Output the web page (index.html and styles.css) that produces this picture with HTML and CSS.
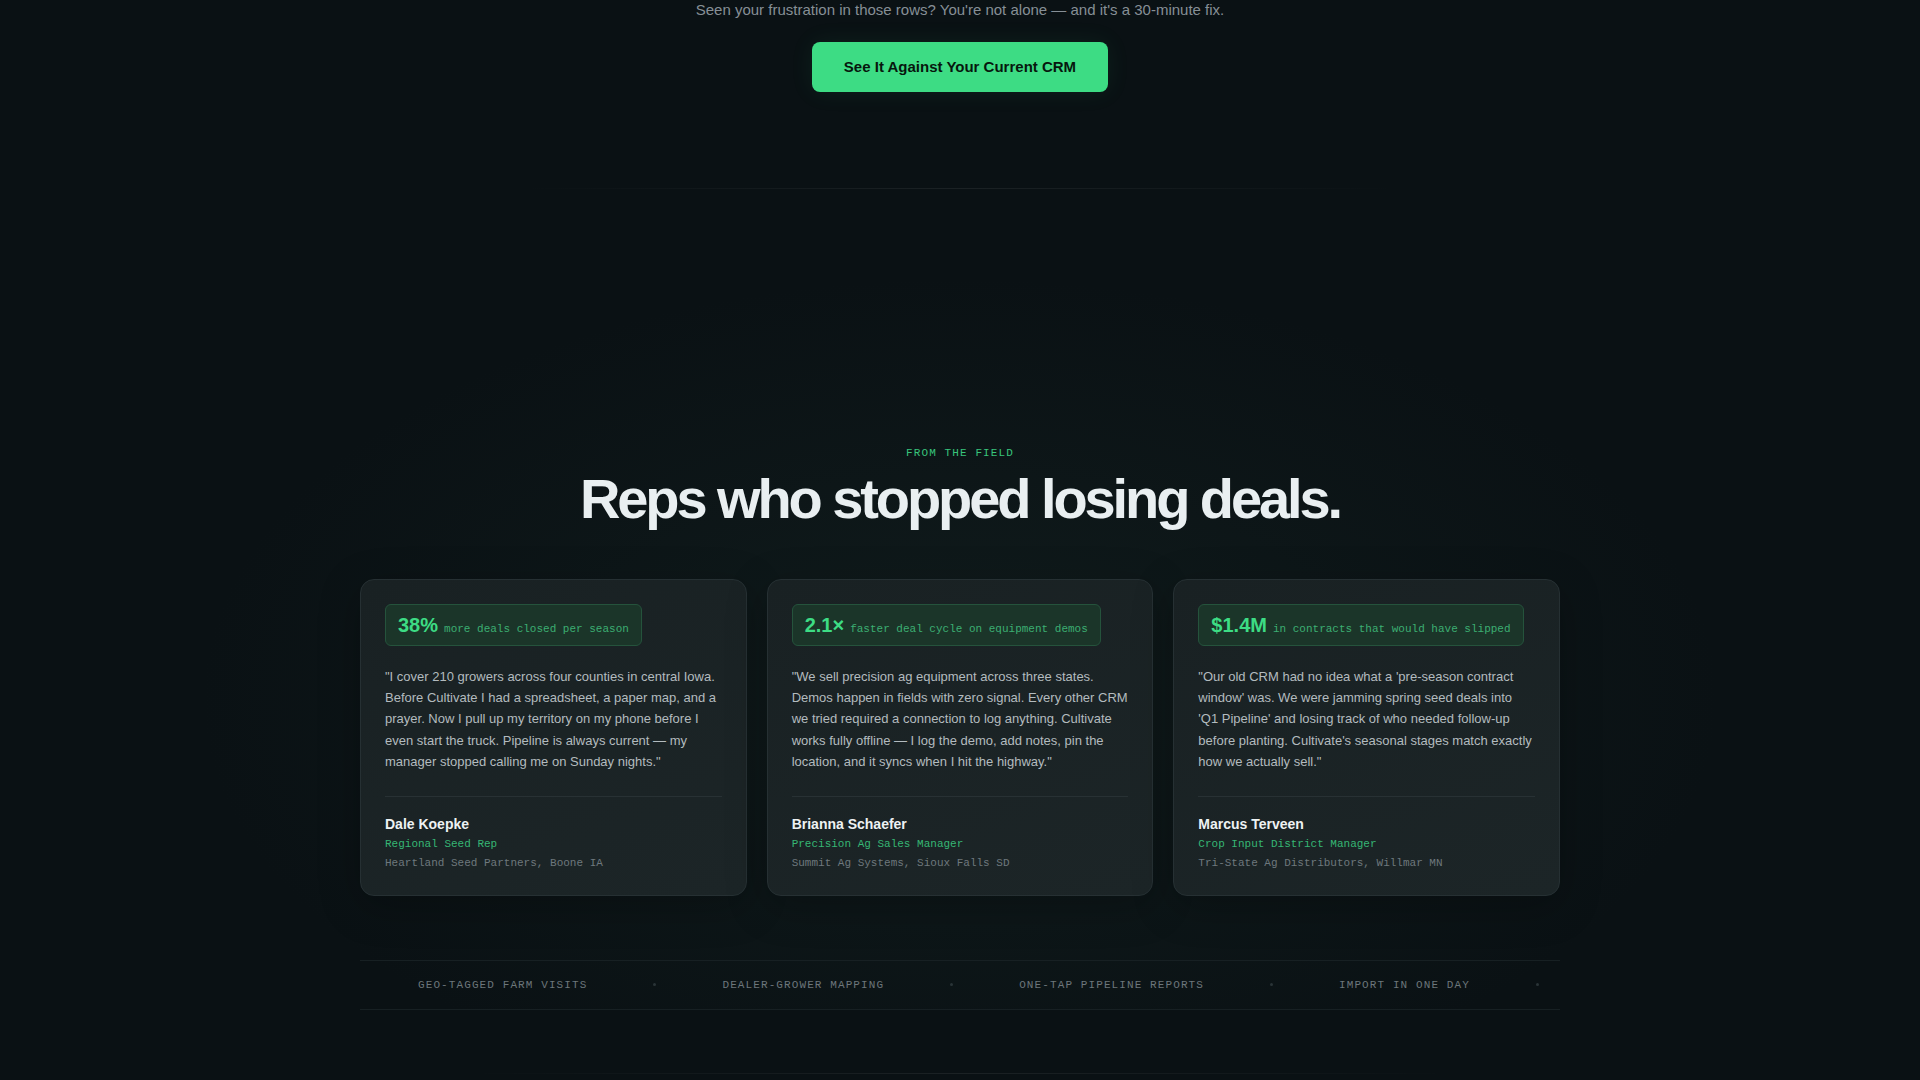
FILE: index.html
```html
<!DOCTYPE html>
<html lang="en">
<head>
    <meta charset="UTF-8">
    <meta name="viewport" content="width=device-width, initial-scale=1.0">
    <title>Cultivate - From the Field</title>
    <link rel="stylesheet" href="styles.css">
</head>
<body>
    <section class="cta">
        <p class="cta-sub">Seen your frustration in those rows? You're not alone — and it's a 30-minute fix.</p>
        <a class="cta-btn" href="#">See It Against Your Current CRM</a>
    </section>

    <div class="divider"></div>

    <section class="testimonials">
        <div class="eyebrow">FROM THE FIELD</div>
        <h2 class="section-title">Reps who stopped losing deals.</h2>

        <div class="cards">
            <div class="card">
                <div class="stat">
                    <span class="stat-num">38%</span>
                    <span class="stat-label">more deals closed per season</span>
                </div>
                <p class="quote">"I cover 210 growers across four counties in central Iowa. Before Cultivate I had a spreadsheet, a paper map, and a prayer. Now I pull up my territory on my phone before I even start the truck. Pipeline is always current — my manager stopped calling me on Sunday nights."</p>
                <div class="author">
                    <div class="author-name">Dale Koepke</div>
                    <div class="author-role">Regional Seed Rep</div>
                    <div class="author-org">Heartland Seed Partners, Boone IA</div>
                </div>
            </div>

            <div class="card">
                <div class="stat">
                    <span class="stat-num">2.1×</span>
                    <span class="stat-label">faster deal cycle on equipment demos</span>
                </div>
                <p class="quote">"We sell precision ag equipment across three states. Demos happen in fields with zero signal. Every other CRM we tried required a connection to log anything. Cultivate works fully offline — I log the demo, add notes, pin the location, and it syncs when I hit the highway."</p>
                <div class="author">
                    <div class="author-name">Brianna Schaefer</div>
                    <div class="author-role">Precision Ag Sales Manager</div>
                    <div class="author-org">Summit Ag Systems, Sioux Falls SD</div>
                </div>
            </div>

            <div class="card">
                <div class="stat">
                    <span class="stat-num">$1.4M</span>
                    <span class="stat-label">in contracts that would have slipped</span>
                </div>
                <p class="quote">"Our old CRM had no idea what a 'pre-season contract window' was. We were jamming spring seed deals into 'Q1 Pipeline' and losing track of who needed follow-up before planting. Cultivate's seasonal stages match exactly how we actually sell."</p>
                <div class="author">
                    <div class="author-name">Marcus Terveen</div>
                    <div class="author-role">Crop Input District Manager</div>
                    <div class="author-org">Tri-State Ag Distributors, Willmar MN</div>
                </div>
            </div>
        </div>

        <div class="features">
            <span class="feature">GEO-TAGGED FARM VISITS</span>
            <span class="dot"></span>
            <span class="feature">DEALER-GROWER MAPPING</span>
            <span class="dot"></span>
            <span class="feature">ONE-TAP PIPELINE REPORTS</span>
            <span class="dot"></span>
            <span class="feature">IMPORT IN ONE DAY</span>
            <span class="dot"></span>
        </div>
    </section>

    <div class="divider divider-wide"></div>
</body>
</html>
```

FILE: styles.css
```css
* {
    margin: 0;
    padding: 0;
    box-sizing: border-box;
}

body {
    background-color: #0a1114;
    color: #e8eef0;
    font-family: 'Liberation Sans', Arial, sans-serif;
    min-height: 1080px;
    overflow: hidden;
}

/* CTA tail of the previous section */
.cta {
    text-align: center;
    padding-bottom: 96px;
}

.cta-sub {
    font-size: 15px;
    line-height: 20px;
    color: #868f96;
}

.cta-btn {
    display: inline-block;
    margin-top: 22px;
    padding: 16px 32px;
    background-color: #3ddc84;
    color: #07170e;
    font-size: 15px;
    font-weight: bold;
    line-height: 18px;
    text-decoration: none;
    border-radius: 8px;
    box-shadow: 0 0 24px rgba(61, 220, 132, 0.08);
}

.divider {
    width: 880px;
    height: 1px;
    margin: 0 auto;
    background: linear-gradient(90deg, transparent, rgba(255, 255, 255, 0.07), transparent);
}

.divider-wide {
    width: 980px;
    margin-top: 63px;
}

/* Testimonials */
.testimonials {
    padding-top: 256px;
    background: radial-gradient(ellipse 760px 420px at 50% 62%, rgba(28, 48, 44, 0.35), transparent);
}

.eyebrow {
    text-align: center;
    font-family: 'Liberation Mono', 'Courier New', monospace;
    font-size: 11px;
    line-height: 16px;
    letter-spacing: 0.1em;
    color: #38c47c;
}

.section-title {
    margin-top: 7px;
    text-align: center;
    font-size: 56px;
    line-height: 1.1;
    font-weight: bold;
    letter-spacing: -0.055em;
    color: #e9eff1;
}

.cards {
    display: grid;
    grid-template-columns: repeat(3, 1fr);
    gap: 20px;
    width: 1200px;
    margin: 49px auto 0;
}

.card {
    padding: 24px;
    border: 1px solid #263033;
    border-radius: 14px;
    background: linear-gradient(160deg, #192123, #1c2527);
    box-shadow: 0 10px 40px rgba(0, 0, 0, 0.25);
}

.stat {
    display: inline-flex;
    align-items: baseline;
    gap: 6px;
    padding: 8px 12px;
    border: 1px solid #25533c;
    border-radius: 6px;
    background-color: #1b3529;
}

.stat-num {
    font-size: 20px;
    line-height: 24px;
    font-weight: bold;
    color: #3ddc84;
}

.stat-label {
    font-family: 'Liberation Mono', 'Courier New', monospace;
    font-size: 11px;
    color: #3cae72;
}

.quote {
    margin: 20px 0 23px;
    font-size: 13px;
    line-height: 1.65;
    color: #b3bbbf;
}

.author {
    padding-top: 17px;
    border-top: 1px solid #283134;
}

.author-name {
    font-size: 14px;
    line-height: 20px;
    font-weight: bold;
    color: #eef2f3;
}

.author-role,
.author-org {
    font-family: 'Liberation Mono', 'Courier New', monospace;
    font-size: 11px;
    line-height: 16px;
}

.author-role {
    margin-top: 2px;
    color: #36b674;
}

.author-org {
    margin-top: 3px;
    color: #6e787d;
}

/* Feature strip */
.features {
    display: flex;
    align-items: center;
    gap: 66px;
    width: 1200px;
    margin: 64px auto 0;
    padding: 16px 0 16px 58px;
    border-top: 1px solid #172023;
    border-bottom: 1px solid #172023;
}

.feature {
    font-family: 'Liberation Mono', 'Courier New', monospace;
    font-size: 11px;
    line-height: 16px;
    letter-spacing: 0.1em;
    color: #6c767b;
}

.dot {
    width: 3px;
    height: 3px;
    border-radius: 50%;
    background-color: #2a3437;
}
```
